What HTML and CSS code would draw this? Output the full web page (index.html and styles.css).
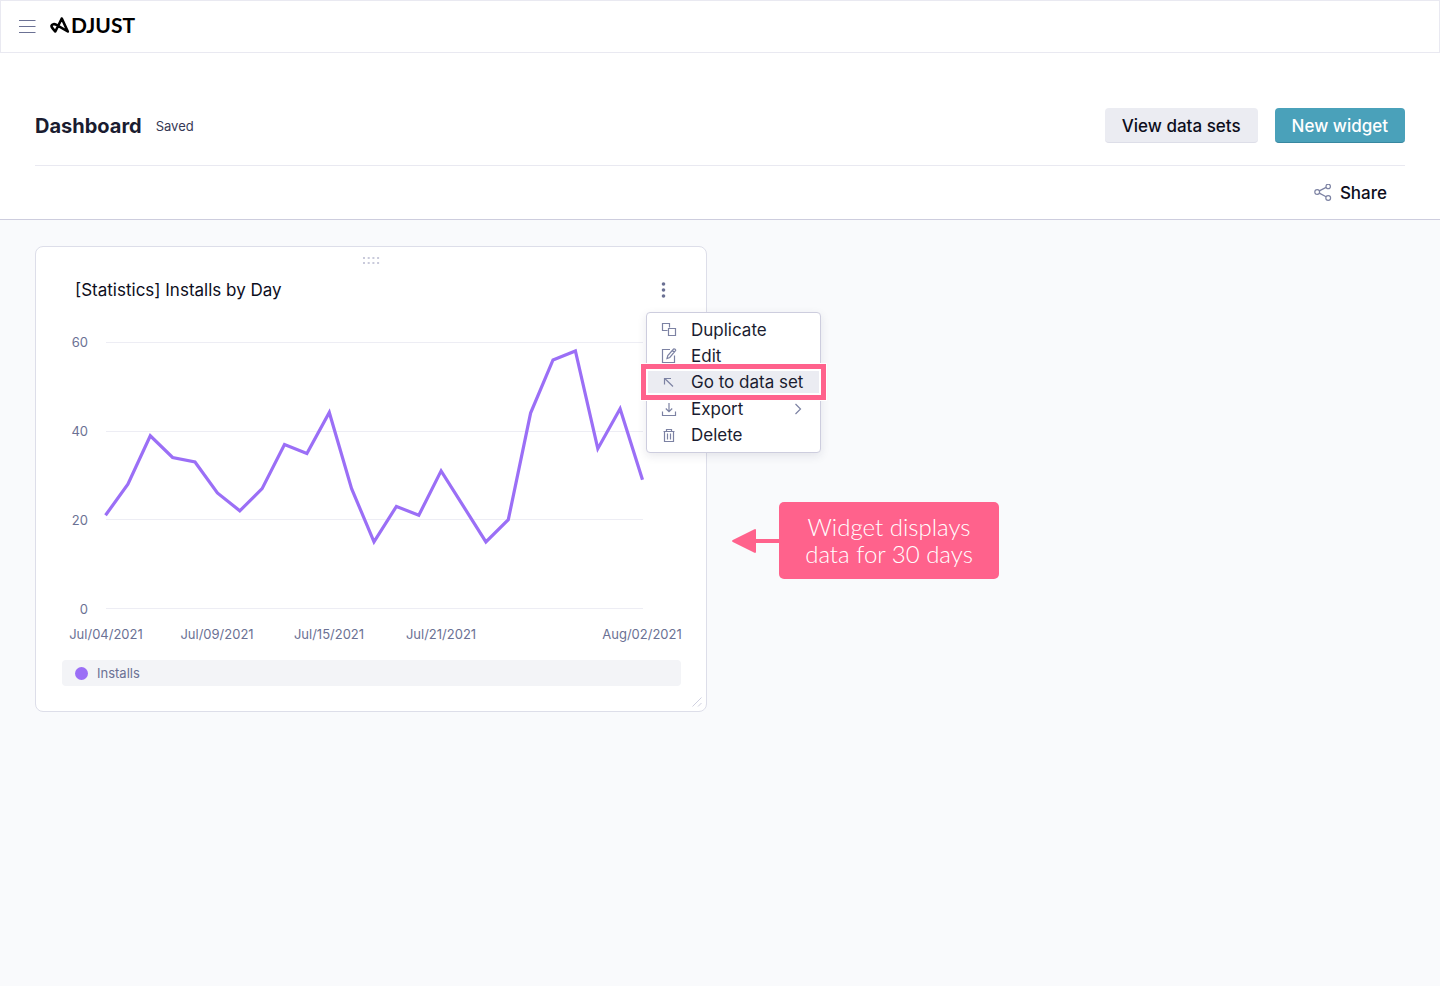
FILE: index.html
```html
<!DOCTYPE html>
<html lang="en">
<head>
<meta charset="utf-8">
<meta name="viewport" content="width=device-width, initial-scale=1">
<title>Adjust – Dashboard</title>
<link rel="stylesheet" href="styles.css">
</head>
<body>
<header class="topbar">
  <button class="icon-button" type="button" aria-label="Open navigation">
    <svg width="17" height="16" viewBox="0 0 17 16" stroke="#6b7194" fill="none"><path d="M0 1.500h16.500M0 7.500h16.500M0 13.500h16.500"/></svg>
  </button>
  <a class="logo" href="#" aria-label="Adjust">
    <svg width="20" height="18" viewBox="0 0 20 18" fill="none" stroke="#000" stroke-width="2.600" stroke-linecap="round" stroke-linejoin="round"><path d="M17.800 15.500 11.800 2.500 5.300 15.500C4 13.700 1.300 11.500 1.500 9.800c.3-1.800 2.900-2 4.500-1.200L17.800 15.500"/></svg>
    <span>DJUST</span>
  </a>
</header>

<section class="page-head">
  <div class="title-row">
    <h1>Dashboard</h1>
    <span class="status">Saved</span>
    <div class="actions">
      <button class="button" type="button">View data sets</button>
      <button class="button button-primary" type="button">New widget</button>
    </div>
  </div>
  <div class="tool-row">
    <button class="share" type="button">
      <svg width="18" height="18" viewBox="0 0 18 18" fill="none" stroke="#7c82a3" stroke-width="1.200"><circle cx="3.200" cy="8" r="2.400"/><circle cx="14.200" cy="2.400" r="2.200"/><circle cx="14.200" cy="14" r="2.400"/><path d="M5.300 6.900 12.100 3.400M5.300 9.100l6.800 3.700"/></svg>
      Share
    </button>
  </div>
</section>

<main class="board">
  <article class="widget">
    <svg class="grip" width="17" height="8" viewBox="0 0 17 8" fill="#c9cadb"><path d="M0 0h2v2H0zM4.700 0h2v2h-2zM9.400 0h2v2h-2zM14.100 0h2v2h-2zM0 5h2v2H0zM4.700 5h2v2h-2zM9.400 5h2v2h-2zM14.100 5h2v2h-2z"/></svg>
    <div class="widget-head">
      <h2>[Statistics] Installs by Day</h2>
      <div class="menu-anchor">
        <button class="icon-button more" type="button" aria-label="Widget options" aria-expanded="true">
          <svg width="6" height="18" viewBox="0 0 6 18" fill="#6b7194"><circle cx="2.500" cy="3" r="1.800"/><circle cx="2.500" cy="9" r="1.800"/><circle cx="2.500" cy="15" r="1.800"/></svg>
        </button>
        <div class="menu" role="menu">
          <button class="item" type="button" role="menuitem">
            <svg viewBox="0 0 16 16"><path d="M6.500 8.500H1.500v-7h7v4M7.500 6.500h7v7h-7z"/></svg>Duplicate</button>
          <button class="item" type="button" role="menuitem">
            <svg viewBox="0 0 16 16"><path d="M9 1.500H1.500v13h12V7.500M6 10.500l.8-3L12.600 1c.7-.7 2.600.8 1.900 1.700L8.800 9.500zM11.400 2.500l1.900 1.600"/></svg>Edit</button>
          <button class="item item-active" type="button" role="menuitem">
            <svg viewBox="0 0 16 16"><path d="M12 12.500 4 4.800M3.500 10.500v-6h6.500"/></svg>Go to data set</button>
          <button class="item" type="button" role="menuitem">
            <svg viewBox="0 0 16 16"><path d="M1.500 10.500v4h13v-4M8 2v8.500M4.800 7.500 8 10.700l3.200-3.200"/></svg>Export
            <svg class="chevron" viewBox="0 0 8 12"><path d="m1.500 1 5 5-5 5"/></svg></button>
          <button class="item" type="button" role="menuitem">
            <svg viewBox="0 0 16 16"><path d="M2.500 4.500h11M5.500 4.500v-2h5v2M3.500 4.500v10h9v-10M6.500 6.500v6M9.500 6.500v6"/></svg>Delete</button>
        </div>
      </div>
    </div>
    <svg class="chart" viewBox="0 0 670 322" role="img" aria-label="Installs by day, line chart">
      <path class="grid" d="M70 14.500h537M70 103.500h537M70 191.500h537M70 280.500h537"/>
      <g class="labels" text-anchor="end">
        <text x="52" y="19">60</text><text x="52" y="108">40</text><text x="52" y="197">20</text><text x="52" y="286">0</text>
      </g>
      <g class="labels" text-anchor="middle">
        <text x="70" y="311">Jul/04/2021</text><text x="181" y="311">Jul/09/2021</text><text x="293" y="311">Jul/15/2021</text><text x="405" y="311">Jul/21/2021</text><text x="606" y="311">Aug/02/2021</text>
      </g>
      <polyline class="line" points="69.500,187.300 91.900,156.200 114.300,107.800 136.600,129.500 159,134 181.400,165 203.800,182.800 226.100,160.600 248.500,116.500 270.900,125.500 293.300,84.500 315.600,160.600 338,213.900 360.400,178.400 382.800,187.300 405.100,142.900 427.500,178.400 449.900,213.900 472.300,191.700 494.600,85.100 517,31.900 539.400,23 561.800,120.700 584.100,80.700 606.500,151.700"/>
    </svg>
    <div class="legend"><span class="dot"></span>Installs</div>
    <svg class="resize" width="10" height="10" viewBox="0 0 10 10" stroke="#cfd0e0" fill="none"><path d="M.5 9.500 9.500.5M6 9.500l3.500-3.500"/></svg>
    <aside class="callout">
      <svg width="47" height="26" viewBox="0 0 47 26" fill="#ff628c"><path d="M.8 12 22.500 1.200q1.500-.5 1.500 1V11h23v4H24v8.800q0 1.500-1.500 1L.8 14q-1.500-1 0-2z"/></svg>
      <p>Widget displays<br>data for 30 days</p>
    </aside>
  </article>
</main>
</body>
</html>
```
FILE: styles.css
```css
* { box-sizing: border-box; }

body {
  margin: 0;
  min-height: 100vh;
  background: #f9fafc;
  color: #0d0e1c;
  font-family: Inter, "Liberation Sans", sans-serif;
  font-size: 17px;
}

h1, h2, p { margin: 0; }

button {
  border: 0;
  background: none;
  color: inherit;
  font: inherit;
  cursor: pointer;
}

.icon-button { display: flex; padding: 0; }

.topbar {
  display: flex;
  align-items: center;
  gap: 14px;
  height: 53px;
  padding: 0 18px;
  border: 1px solid #e9e9f1;
  background: #fff;
}

.logo {
  display: flex;
  align-items: center;
  gap: 1px;
  padding-bottom: 3px;
  color: #000;
  font: 700 21px/24px Lato, sans-serif;
  text-decoration: none;
}

.page-head {
  padding: 55px 35px 0;
  border-bottom: 1px solid #cdcdde;
  background: #fff;
}

.title-row {
  display: flex;
  align-items: center;
  padding-bottom: 22px;
  border-bottom: 1px solid #e9e9f1;
}

h1 {
  color: #1a1c30;
  font-size: 20px;
  font-weight: 700;
  line-height: 28px;
}

.status {
  margin-left: 14px;
  color: #363955;
  font-size: 13px;
  line-height: 18px;
}

.actions {
  display: flex;
  gap: 17px;
  margin-left: auto;
}

.button {
  height: 35px;
  padding: 2px 17px 0;
  border-bottom: 1px solid #dddee8;
  border-radius: 4px;
  background: #ebecf2;
  font-weight: 500;
}

.button-primary {
  border-bottom-color: #3787a0;
  background: #4aa1ba;
  color: #fff;
}

.tool-row {
  display: flex;
  justify-content: flex-end;
  height: 53px;
  padding-right: 18px;
}

.share {
  display: flex;
  align-items: center;
  gap: 8px;
  padding: 0;
  font-weight: 500;
}

.board {
  display: grid;
  grid-template-columns: repeat(2, 1fr);
  gap: 26px;
  padding: 26px 35px;
}

.widget {
  position: relative;
  padding-bottom: 25px;
  border: 1px solid #dddee9;
  border-radius: 8px;
  background: #fff;
}

.grip { display: block; margin: 10px auto 0; }

.widget-head {
  display: flex;
  align-items: center;
  justify-content: space-between;
  height: 50px;
  padding: 0 39px;
}

h2 { font-size: 17px; font-weight: 400; }

.menu-anchor { position: relative; }

.menu {
  position: absolute;
  z-index: 1;
  top: 31px;
  left: -15px;
  width: 175px;
  padding: 4px 0;
  border: 1px solid #cdcdde;
  border-radius: 4px;
  background: #fff;
  box-shadow: 0 3px 10px rgba(30, 32, 70, 0.1);
}

.item {
  position: relative;
  display: flex;
  align-items: center;
  gap: 14px;
  width: 100%;
  height: 26px;
  padding: 0 14px;
  color: #1a1c30;
  white-space: nowrap;
}

.item svg {
  flex: none;
  width: 16px;
  height: 16px;
  fill: none;
  stroke: #7c82a3;
  stroke-width: 1.2;
}

.item .chevron {
  width: 8px;
  height: 12px;
  margin-left: auto;
  margin-right: 4px;
}

.item-active {
  z-index: 1;
  margin-bottom: 1px;
  background: #ebecf2;
}

.item-active::after {
  content: "";
  position: absolute;
  inset: -5px -6px;
  border: 5px solid #ff628c;
  box-shadow: 0 0 0 1px #fff, inset 0 0 0 2px #fff;
}

.chart {
  display: block;
  width: 100%;
  margin-top: 13px;
}

.grid { stroke: #ededf4; }

.labels { fill: #6b7194; font-size: 13px; }

.line {
  fill: none;
  stroke: #9b6ff6;
  stroke-width: 3.2;
  stroke-linejoin: miter;
}

.legend {
  display: flex;
  align-items: center;
  gap: 9px;
  height: 26px;
  margin: 10px 25px 0 26px;
  padding: 0 13px;
  border-radius: 4px;
  background: #f3f4f7;
  color: #6b7194;
  font-size: 13px;
}

.dot {
  width: 13px;
  height: 13px;
  border-radius: 50%;
  background: #9b6ff6;
}

.resize {
  position: absolute;
  right: 4px;
  bottom: 4px;
}

.callout {
  position: absolute;
  top: 255px;
  left: calc(100% + 26px);
  display: flex;
  align-items: center;
}

.callout p {
  width: 220px;
  padding: 11px 0 12px;
  border-radius: 5px;
  background: #ff628c;
  color: #fff;
  font: 300 24px/27px Lato, sans-serif;
  text-align: center;
}
```
